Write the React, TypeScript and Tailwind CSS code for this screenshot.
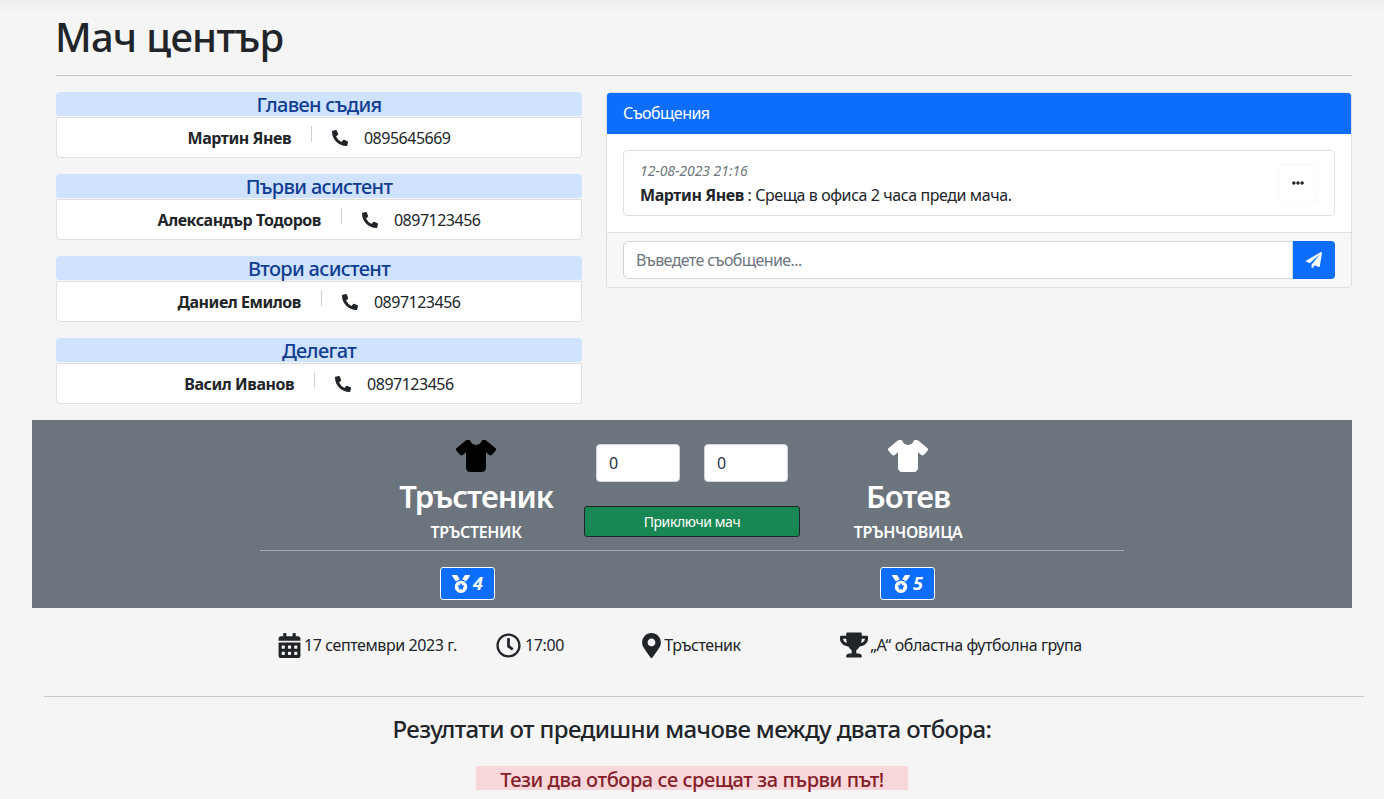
import { FaEllipsisH, FaMapMarkerAlt, FaMedal, FaPaperPlane, FaPhoneAlt, FaRegClock, FaTrophy, FaCalendarAlt } from 'react-icons/fa';
import { FaShirt } from 'react-icons/fa6';

const officials = [
  { role: 'Главен съдия', name: 'Мартин Янев', phone: '0895645669' },
  { role: 'Първи асистент', name: 'Александър Тодоров', phone: '0897123456' },
  { role: 'Втори асистент', name: 'Даниел Емилов', phone: '0897123456' },
  { role: 'Делегат', name: 'Васил Иванов', phone: '0897123456' },
];

function Official({ role, name, phone }: { role: string; name: string; phone: string }) {
  return (
    <div>
      <div className="h-[24px] rounded-t-[4px] rounded-b-[3px] bg-[#cfe2ff] text-center text-[20px] leading-[26px] font-medium text-[#0f3d91] tracking-[-0.67px]">
        {role}
      </div>
      <div className="mt-px flex h-[41px] items-center justify-center rounded-b-[4px] border border-[#dfdfdf] bg-white text-[16px]">
        <span className="font-bold tracking-[-0.45px]">{name}</span>
        <span className="mx-5 h-4 w-px -translate-y-1 bg-[#cfcfcf]" />
        <FaPhoneAlt className="mr-4 text-[16px]" />
        <span className="tracking-[-0.5px]">{phone}</span>
      </div>
    </div>
  );
}

function Team({ name, town, shirt }: { name: string; town: string; shirt: string }) {
  return (
    <div className="flex flex-col items-center pt-[16px] text-white">
      <FaShirt className={`text-[40px] ${shirt}`} />
      <div className="mt-[1px] text-[31px] leading-[38px] font-semibold tracking-[-1px]">{name}</div>
      <div className="mt-[7px] text-[16px] leading-[20px] font-semibold tracking-[-0.35px]">{town}</div>
    </div>
  );
}

function Wins({ count, className }: { count: number; className?: string }) {
  return (
    <div className={`flex justify-center ${className ?? ''}`}>
      <div className="flex h-[33px] w-[55px] items-center justify-center gap-[3px] rounded-[3px] border border-white bg-[#0d6efd] text-white">
        <FaMedal className="text-[18px]" />
        <span className="text-[18px] font-bold italic">{count}</span>
      </div>
    </div>
  );
}

export default function App() {
  return (
    <div className="h-[799px] w-[1384px] overflow-hidden bg-[#f5f5f5] bg-gradient-to-b from-[#eeeeee] to-[#f5f5f5] bg-[length:100%_14px] bg-no-repeat font-['Noto_Sans',sans-serif] text-[#212529]">
      <div className="ml-14 mr-8 pt-[11px]">
        <h1 className="-ml-px h-[52px] text-[40px] leading-[52px] font-medium tracking-[-0.7px]">Мач център</h1>
        <hr className="mt-[12px] border-[#c8c8c8]" />
        <div className="mt-4 grid grid-cols-[526px_746px] gap-6">
          <div className="flex flex-col gap-4">
            {officials.map((o) => (
              <Official key={o.role} {...o} />
            ))}
          </div>
          <div className="h-[196px] overflow-hidden rounded-[4px] border border-[#dfdfdf] bg-white">
            <div className="h-[41px] bg-[#0d6efd] px-4 text-[16px] leading-[41px] tracking-[-0.55px] text-white">Съобщения</div>
            <div className="h-[99px] border-b border-[#dfdfdf] p-4">
              <div className="flex h-[66px] items-center justify-between rounded-[4px] border border-[#dfdfdf] pr-4 pl-4">
                <div>
                  <div className="text-[14px] leading-[20px] tracking-[-0.05px] text-[#6c757d] italic">12-08-2023 21:16</div>
                  <div className="mt-[3px] text-[16px] leading-[22px] tracking-[-0.42px]">
                    <b>Мартин Янев</b> : Среща в офиса 2 часа преди мача.
                  </div>
                </div>
                <div className="flex h-[38px] w-[40px] items-center justify-center rounded-[4px] border border-[#f7f7f7]">
                  <FaEllipsisH className="text-[12px]" />
                </div>
              </div>
            </div>
            <div className="flex h-[55px] bg-[#f7f7f7] px-4 pt-2">
              <div className="h-[38px] flex-1 rounded-l-[6px] border border-[#ced4da] bg-white px-3 text-[16px] leading-[36px] tracking-[-0.6px] text-[#6c757d]">
                Въведете съобщение...
              </div>
              <div className="flex h-[38px] w-[42px] items-center justify-center rounded-r-[4px] bg-[#0d6efd] text-white">
                <FaPaperPlane className="text-[16px]" />
              </div>
            </div>
          </div>
        </div>
      </div>

      <div className="mx-8 mt-4 h-[188px] bg-[#6c757d]">
        <div className="mx-auto grid h-[130px] w-[648px] grid-cols-3">
          <Team name="Тръстеник" town="ТРЪСТЕНИК" shirt="text-black" />
          <div className="flex flex-col items-center pt-[24px]">
            <div className="flex gap-6">
              <div className="h-[38px] w-[84px] rounded-[4px] border border-[#ced4da] bg-white px-3 text-[16px] leading-[36px] text-[#1f3148]">0</div>
              <div className="h-[38px] w-[84px] rounded-[4px] border border-[#ced4da] bg-white px-3 text-[16px] leading-[36px] text-[#1f3148]">0</div>
            </div>
            <button className="mt-6 h-[31px] w-[216px] rounded-[3px] border border-[#212529] bg-[#198754] text-[14px] tracking-[-0.4px] text-white">
              Приключи мач
            </button>
          </div>
          <Team name="Ботев" town="ТРЪНЧОВИЦА" shirt="text-white" />
        </div>
        <hr className="mx-auto w-[864px] border-[#a3a9ae]" />
        <div className="mx-auto mt-[16px] grid w-[648px] grid-cols-3">
          <Wins count={4} className="pr-[17px]" />
          <div />
          <Wins count={5} className="pr-px" />
        </div>
      </div>

      <div className="mx-auto mt-[23px] grid h-[26px] w-[864px] grid-cols-8 text-[16px] tracking-[-0.42px]">
        <div className="col-span-2 flex items-center justify-center gap-[2px] pr-[2px]">
          <FaCalendarAlt className="text-[25px]" /> 17 септември 2023 г.
        </div>
        <div className="flex items-center justify-center gap-[4px]">
          <FaRegClock className="text-[25px]" /> 17:00
        </div>
        <div className="col-span-2 flex items-center justify-center pr-[4px]">
          <FaMapMarkerAlt className="text-[25px]" /> Тръстеник
        </div>
        <div className="col-span-3 flex items-center justify-center gap-[2px] pr-[2px]">
          <FaTrophy className="text-[28px]" /> „А“ областна футболна група
        </div>
      </div>

      <hr className="mt-[39px] ml-11 mr-5 border-[#c8c8c8]" />
      <h2 className="mt-[16px] text-center text-[24px] leading-[32px] font-medium tracking-[-0.62px]">
        Резултати от предишни мачове между двата отбора:
      </h2>
      <div className="mx-auto mt-[21px] h-[24px] w-[432px] bg-[#f8d7da] text-center text-[20px] leading-[28px] font-medium tracking-[-0.43px] text-[#842029]">
        Тези два отбора се срещат за първи път!
      </div>
    </div>
  );
}
